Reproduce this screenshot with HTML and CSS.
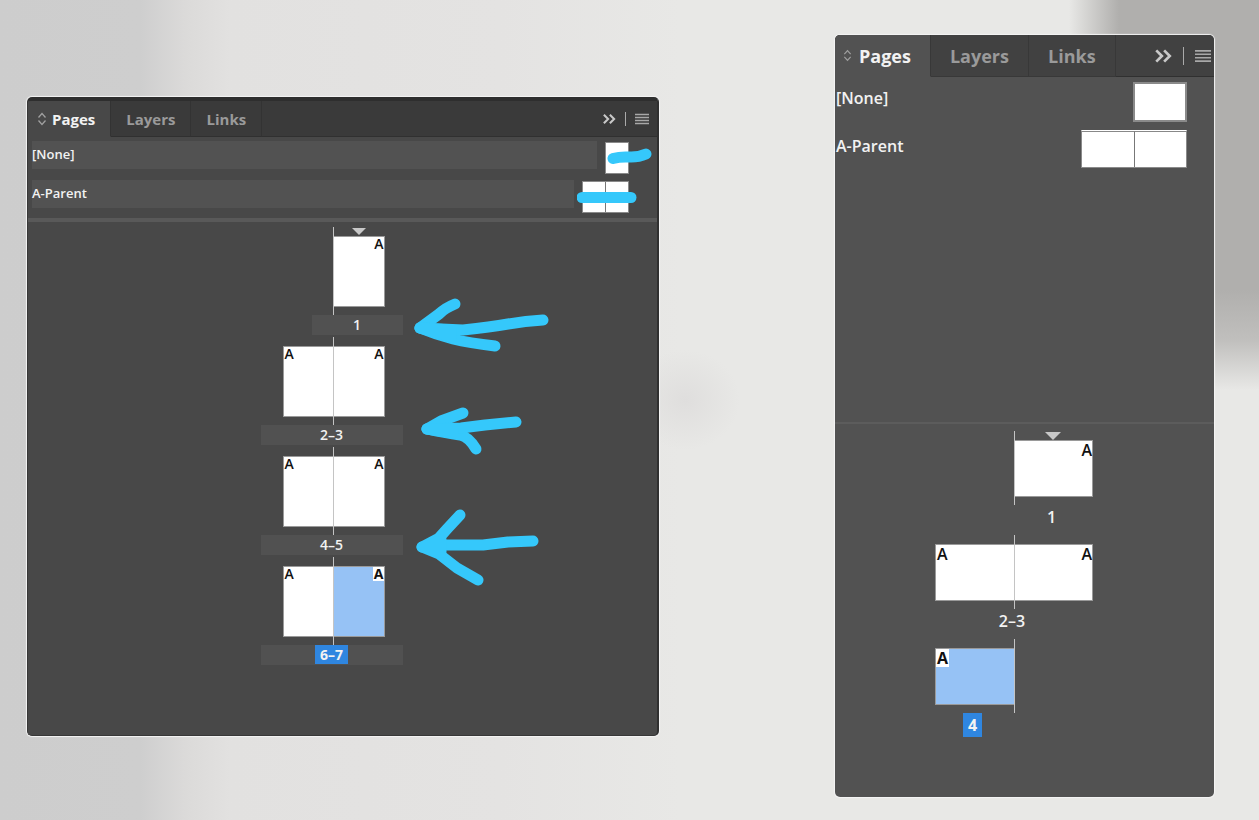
FILE: index.html
```html
<!DOCTYPE html>
<html lang="en">
<head>
    <meta charset="UTF-8">
    <meta name="viewport" content="width=device-width, initial-scale=1.0">
    <title>Pages</title>
    <link rel="stylesheet" href="styles.css">
</head>
<body>
    <main class="board">
        <!-- portrait document -->
        <section class="panel panel-small">
            <header class="bar">
                <button class="tab active" type="button">
                    <svg class="updown" viewBox="0 0 10 14"><path d="M1.5 5.5 5 1.5l3.5 4M1.5 8.5l3.5 4 3.5-4"/></svg>Pages
                </button>
                <button class="tab" type="button">Layers</button>
                <button class="tab" type="button">Links</button>
                <div class="tools">
                    <button class="tool" type="button" aria-label="Collapse">
                        <svg class="chevrons" viewBox="0 0 16 14"><path d="M2 2l5 5-5 5M9 2l5 5-5 5"/></svg>
                    </button>
                    <span class="split"></span>
                    <button class="tool" type="button" aria-label="Menu">
                        <svg class="lines" viewBox="0 0 14 12"><path d="M0 1.5h14M0 4.5h14M0 7.5h14M0 10.5h14"/></svg>
                    </button>
                </div>
            </header>
            <div class="parents">
                <div class="row">
                    <span class="name">[None]</span>
                    <div class="thumb">
                        <i class="sheet"></i>
                        <svg class="mark strike" viewBox="0 0 64 32"><path d="M13 16.500Q20 14.500 29 15T46 12"/></svg>
                    </div>
                </div>
                <div class="row">
                    <span class="name">A-Parent</span>
                    <div class="thumb">
                        <i class="sheet"></i><i class="sheet"></i>
                        <svg class="mark strike" viewBox="0 0 64 32"><path d="M5 16.500H54"/></svg>
                    </div>
                </div>
            </div>
            <div class="spreads">
                <div class="spread">
                    <div class="stage">
                        <div class="page right first"><b>A</b></div>
                    </div>
                    <div class="label half"><span>1</span></div>
                    <svg class="mark arrow" viewBox="0 0 160 100"><path d="M52 17Q42 21 36 27L17 41Q34 48 50 52T92 59"/><path d="M140 33Q122 34 105 37T60 43L17 41"/><path class="solid" d="M17 41L48 43V50Z"/></svg>
                </div>
                <div class="spread">
                    <div class="stage">
                        <div class="page left"><b>A</b></div>
                        <div class="page right"><b>A</b></div>
                    </div>
                    <div class="label"><span>2–3</span></div>
                    <svg class="mark arrow" viewBox="0 0 160 100"><path d="M60 16L38 24 24 32Q42 36 57 38Q66 40 73 52"/><path d="M113 25L82 28 58 31 24 32"/><path class="solid" d="M24 32L50 32V36Z"/></svg>
                </div>
                <div class="spread">
                    <div class="stage">
                        <div class="page left"><b>A</b></div>
                        <div class="page right"><b>A</b></div>
                    </div>
                    <div class="label"><span>4–5</span></div>
                    <svg class="mark arrow" viewBox="0 0 160 100"><path d="M57 8L44 22 36 31 19 40 36 47 54 61 75 73"/><path d="M130 34L105 35 80 38H40L19 40"/><path class="solid" d="M22 40L38 33V45Z"/></svg>
                </div>
                <div class="spread">
                    <div class="stage">
                        <div class="page left"><b>A</b></div>
                        <div class="page right selected"><b>A</b></div>
                    </div>
                    <div class="label current"><span>6–7</span></div>
                </div>
            </div>
        </section>

        <!-- landscape document -->
        <section class="panel panel-large">
            <header class="bar">
                <button class="tab active" type="button">
                    <svg class="updown" viewBox="0 0 10 14"><path d="M1.5 5.5 5 1.5l3.5 4M1.5 8.5l3.5 4 3.5-4"/></svg>Pages
                </button>
                <button class="tab" type="button">Layers</button>
                <button class="tab" type="button">Links</button>
                <div class="tools">
                    <button class="tool" type="button" aria-label="Collapse">
                        <svg class="chevrons" viewBox="0 0 16 14"><path d="M2 2l5 5-5 5M9 2l5 5-5 5"/></svg>
                    </button>
                    <span class="split"></span>
                    <button class="tool" type="button" aria-label="Menu">
                        <svg class="lines" viewBox="0 0 14 12"><path d="M0 1.5h14M0 4.5h14M0 7.5h14M0 10.5h14"/></svg>
                    </button>
                </div>
            </header>
            <div class="parents">
                <div class="row">
                    <span class="name">[None]</span>
                    <div class="thumb framed"><i class="sheet"></i></div>
                </div>
                <div class="row">
                    <span class="name">A-Parent</span>
                    <div class="thumb topped"><i class="sheet"></i><i class="sheet"></i></div>
                </div>
            </div>
            <div class="spreads">
                <div class="spread">
                    <div class="stage">
                        <div class="page right first"><b>A</b></div>
                    </div>
                    <div class="label half"><span>1</span></div>
                </div>
                <div class="spread">
                    <div class="stage">
                        <div class="page left"><b>A</b></div>
                        <div class="page right"><b>A</b></div>
                    </div>
                    <div class="label"><span>2–3</span></div>
                </div>
                <div class="spread">
                    <div class="stage">
                        <div class="page left selected"><b>A</b></div>
                    </div>
                    <div class="label half-left current"><span>4</span></div>
                </div>
            </div>
        </section>
    </main>
</body>
</html>
```

FILE: styles.css
```css
*{margin:0;
padding:0;
box-sizing: border-box;}
body{
    font-family: "Open Sans", "Noto Sans", sans-serif;
    color: #f2f2f2;
    background:
        linear-gradient(#b0afad 290px, #c0bfbd 340px, #b0afad00) right top / 45px 390px no-repeat,
        linear-gradient(to right, #b0afad00, #b0afad 50px) right top / 190px 60px no-repeat,
        radial-gradient(closest-side, #dfdedd, #dfdedd00) 630px 350px / 110px 100px no-repeat,
        linear-gradient(to right, #cdcdcd, #cecece 140px, #dbdad9 185px, #e2e1e0 230px, #e4e3e2 500px, #e8e8e6 680px);
}
svg{display: block;fill: none;}
button{font: inherit;color: inherit;background: none;border: 0;}
.board{
    display: grid;
    grid-template-columns: 632fr 379fr;
    column-gap: 176px;
    align-items: start;
    min-height: 100vh;
    padding: 35px 45px 23px 27px;
}
.panel{
    display: flex;
    flex-direction: column;
    border-radius: 5px;
    overflow: hidden;
    box-shadow: 0 0 1px 1px #f4f4f4;
}
.panel-small{
    min-height: 639px;
    margin-top: 62px;
    background-color: #484848;
    border: 1px solid #383838;
    border-top: 4px solid #2e2e2e;
    border-right: 2px solid #303030;
}
.panel-large{min-height: 762px;background-color: #525252;}

/* tabs */
.bar{display: flex;height: 36px;background-color: #3a3a3a;}
.tab{
    display: flex;
    align-items: center;
    padding: 0 15px;
    font-size: 15px;
    font-weight: bold;
    color: #9a9a9a;
    border-right: 1px solid #333;
    border-bottom: 1px solid #303030;
}
.tab.active{
    gap: 5px;
    padding: 0 15px 0 9px;
    color: #f2f2f2;
    background-color: #484848;
    border-bottom-color: #484848;
}
.updown{width: 10px;height: 14px;stroke: #a0a0a0;stroke-width: 1.3;}
.tools{
    flex: 1;
    display: flex;
    align-items: center;
    justify-content: flex-end;
    gap: 9px;
    padding-right: 8px;
    border-bottom: 1px solid #303030;
}
.chevrons{width: 14px;height: 12px;stroke: #c8c8c8;stroke-width: 2.4;}
.lines{width: 14px;height: 12px;stroke: #a8a8a8;stroke-width: 1.4;}
.split{width: 1px;height: 14px;background-color: #aaa;}

.panel-large .bar{height: 42px;background-color: #414141;}
.panel-large .tab{padding: 0 19px;font-size: 18px;border-color: #383838;}
.panel-large .tab.active{gap: 7px;padding: 0 19px 0 8px;background-color: #525252;border-bottom-color: #525252;}
.panel-large .tools{gap: 11px;padding-right: 3px;}
.panel-large .chevrons{width: 18px;height: 16px;}
.panel-large .lines{width: 16px;height: 14px;}
.panel-large .split{height: 18px;}
.panel-large .updown{width: 9px;height: 13px;}

/* parent pages */
.parents{
    display: flex;
    flex-direction: column;
    gap: 6px;
    padding: 4px 28px 5px 4px;
    border-bottom: 4px solid #595959;
}
.row{display: flex;gap: 8px;height: 33px;}
.name{
    flex: 1;
    height: 28px;
    line-height: 27px;
    font-size: 13px;
    font-weight: 600;
    background-color: #525252;
}
.thumb{
    position: relative;
    display: flex;
    align-self: flex-end;
    height: 32px;
    border: 1px solid #8a8a8a;
}
.sheet{width: 22px;background-color: #fff;}
.sheet + .sheet{width: 23px;border-left: 1px solid #777;}

.panel-large .parents{
    gap: 8px;
    min-height: 347px;
    padding: 5px 27px 5px 1px;
    border-bottom: 2px solid #5c5c5c;
}
.panel-large .row{height: 40px;}
.panel-large .name{height: 32px;line-height: 32px;font-size: 16px;background: none;}
.panel-large .thumb{height: 38px;}
.panel-large .sheet{width: 52px;}
.panel-large .framed{height: 40px;border-width: 2px;}
.panel-large .framed .sheet{width: 50px;}
.panel-large .topped{align-self: flex-start;border-top-color: #fff;}
.topped .sheet{border-top: 1px solid #888;}

/* spreads, both pages meet on the guide line */
.spreads{
    display: flex;
    flex-direction: column;
    align-items: center;
    gap: 2px;
    padding: 5px 22px 60px 0;
}
.spread{position: relative;width: 142px;}
.stage{
    position: relative;
    display: grid;
    grid-template-columns: 1fr 1fr;
    width: 102px;
    height: 88px;
    margin-left: 22px;
    padding: 9px 0 8px;
}
.stage::after{
    content: "";
    position: absolute;
    left: 50%;
    top: 0;
    bottom: 0;
    margin-left: -1px;
    border-left: 1px solid #c4c4c4;
}
.page{
    position: relative;
    display: flex;
    align-items: flex-start;
    background-color: #fff;
    border: 1px solid #9a9a9a;
}
.page b{
    padding: 0 1px;
    font-size: 14px;
    line-height: 14px;
    font-weight: 600;
    color: #111;
    background-color: #fff;
}
.left{grid-column: 1;border-right: 0;}
.right{grid-column: 2;justify-content: flex-end;border-left: 0;}
.right b{padding-right: 0;}
.selected{background-color: #96c2f5;}
.selected b{font-weight: bold;}
.first::before{
    content: "";
    position: absolute;
    left: 50%;
    top: -9px;
    margin-left: -7px;
    border: 7px solid transparent;
    border-top-color: #c8c8c8;
    border-bottom: 0;
}
.label{
    height: 20px;
    line-height: 19px;
    text-align: center;
    font-size: 14px;
    font-weight: 600;
    background-color: #515151;
}
.half{margin-left: 51px;}
.current span{display: inline-block;padding: 0 5px;font-weight: bold;background-color: #2f86e0;}

.panel-large .spreads{gap: 6px;padding: 7px 25px 60px 0;}
.panel-large .spread{width: 162px;}
.panel-large .stage{width: 158px;height: 74px;margin-left: 4px;}
.panel-large .stage::after{margin-left: 0;}
.panel-large .page b{font-size: 16px;line-height: 18px;}
.panel-large .first::before{margin-left: -8px;border-width: 8px;border-bottom: 0;}
.panel-large .label{height: 24px;line-height: 24px;font-size: 16px;background: none;}
.panel-large .half{margin-left: 79px;}
.panel-large .half-left{margin-right: 83px;margin-left: 4px;}

/* hand drawn marks */
.mark{
    position: absolute;
    z-index: 1;
    stroke: #35c8fb;
    stroke-width: 11;
    stroke-linecap: round;
    stroke-linejoin: round;
}
.solid{fill: #35c8fb;}
.strike{left: -6px;top: -1px;width: 64px;height: 32px;}
.arrow{left: 142px;top: 60px;width: 160px;height: 100px;}
```
